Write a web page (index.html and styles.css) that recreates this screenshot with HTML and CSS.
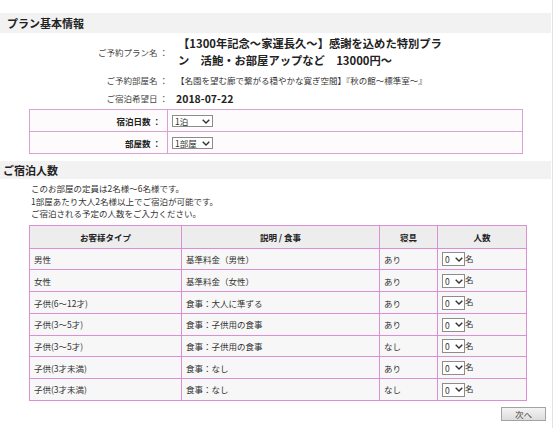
FILE: index.html
```html
<!DOCTYPE html>
<html lang="ja">
<head>
<meta charset="utf-8">
<title>プラン基本情報</title>
<link rel="stylesheet" href="styles.css">
</head>
<body>
<div class="page">
  <div class="sec-head h1">プラン基本情報</div>
  <div class="info">
    <div class="info-row plan">
      <div class="lbl">ご予約プラン名 ：</div>
      <div class="val plan-name">【1300年記念～家運長久～】感謝を込めた特別プラン　活鮑・お部屋アップなど　13000円～</div>
    </div>
    <div class="info-row room">
      <div class="lbl">ご予約部屋名 ：</div>
      <div class="val">【名園を望む廊で繋がる穏やかな寛ぎ空間】『秋の館～標準室～』</div>
    </div>
    <div class="info-row date">
      <div class="lbl">ご宿泊希望日 ：</div>
      <div class="val date-val">2018-07-22</div>
    </div>
  </div>
  <table class="stay">
    <tr>
      <th>宿泊日数 ：</th>
      <td><span class="sel w40"><span class="opt">1泊</span><svg class="chev" viewBox="0 0 8 5"><path d="M0.7 0.7 L4 4 L7.3 0.7"/></svg></span></td>
    </tr>
    <tr>
      <th>部屋数 ：</th>
      <td><span class="sel w40"><span class="opt">1部屋</span><svg class="chev" viewBox="0 0 8 5"><path d="M0.7 0.7 L4 4 L7.3 0.7"/></svg></span></td>
    </tr>
  </table>
  <div class="sec-head h2">ご宿泊人数</div>
  <div class="notes">
    <p>このお部屋の定員は2名様～6名様です。</p>
    <p>1部屋あたり大人2名様以上でご宿泊が可能です。</p>
    <p>ご宿泊される予定の人数をご入力ください。</p>
  </div>
  <table class="guests">
    <thead>
      <tr><th class="c1">お客様タイプ</th><th class="c2">説明 / 食事</th><th class="c3">寝具</th><th class="c4">人数</th></tr>
    </thead>
    <tbody>
      <tr><td>男性</td><td>基準料金（男性）</td><td>あり</td><td><span class="sel w22"><span class="opt">0</span><svg class="chev" viewBox="0 0 8 5"><path d="M0.7 0.7 L4 4 L7.3 0.7"/></svg></span>名</td></tr>
      <tr><td>女性</td><td>基準料金（女性）</td><td>あり</td><td><span class="sel w22"><span class="opt">0</span><svg class="chev" viewBox="0 0 8 5"><path d="M0.7 0.7 L4 4 L7.3 0.7"/></svg></span>名</td></tr>
      <tr><td>子供(6～12才)</td><td>食事：大人に準ずる</td><td>あり</td><td><span class="sel w22"><span class="opt">0</span><svg class="chev" viewBox="0 0 8 5"><path d="M0.7 0.7 L4 4 L7.3 0.7"/></svg></span>名</td></tr>
      <tr><td>子供(3～5才)</td><td>食事：子供用の食事</td><td>あり</td><td><span class="sel w22"><span class="opt">0</span><svg class="chev" viewBox="0 0 8 5"><path d="M0.7 0.7 L4 4 L7.3 0.7"/></svg></span>名</td></tr>
      <tr><td>子供(3～5才)</td><td>食事：子供用の食事</td><td>なし</td><td><span class="sel w22"><span class="opt">0</span><svg class="chev" viewBox="0 0 8 5"><path d="M0.7 0.7 L4 4 L7.3 0.7"/></svg></span>名</td></tr>
      <tr><td>子供(3才未満)</td><td>食事：なし</td><td>あり</td><td><span class="sel w22"><span class="opt">0</span><svg class="chev" viewBox="0 0 8 5"><path d="M0.7 0.7 L4 4 L7.3 0.7"/></svg></span>名</td></tr>
      <tr><td>子供(3才未満)</td><td>食事：なし</td><td>なし</td><td><span class="sel w22"><span class="opt">0</span><svg class="chev" viewBox="0 0 8 5"><path d="M0.7 0.7 L4 4 L7.3 0.7"/></svg></span>名</td></tr>
    </tbody>
  </table>
  <div class="actions"><button class="next" type="button">次へ</button></div>
</div>
</body>
</html>
```
FILE: styles.css
```css
html, body {
  margin: 0;
  padding: 0;
  background: #ffffff;
}
body {
  font-family: "Noto Sans CJK JP", "Noto Sans", sans-serif;
  font-size: 8.5px;
  color: #333333;
}
.page {
  width: 553px;
  min-height: 428px;
  box-sizing: border-box;
  border-right: 1px solid #e8e1dd;
  padding-top: 13px;
}
.sec-head {
  width: 551px;
  height: 20px;
  line-height: 20px;
  background: #f2f2f2;
  font-size: 11px;
  font-weight: bold;
  color: #222222;
  box-sizing: border-box;
}
.h1 { padding-left: 7px; }
.h2 { padding-left: 3px; height: 18px; line-height: 18px; margin-top: 7px; }

.info {
  display: flex;
  flex-direction: column;
}
.info-row {
  display: grid;
  grid-template-columns: 168px 1fr;
  column-gap: 8px;
  align-items: center;
}
.info-row.plan { height: 37px; }
.info-row.room { height: 19px; }
.info-row.date { height: 18px; margin-bottom: 2px; }
.lbl {
  text-align: right;
  color: #444444;
  white-space: nowrap;
}
.val { white-space: nowrap; }
.plan-name {
  white-space: normal;
  width: 270px;
  font-size: 11.3px;
  line-height: 17px;
  font-weight: bold;
  color: #222222;
  margin-left: 2px;
}
.date-val {
  font-size: 10.5px;
  font-weight: bold;
  color: #222222;
}

.stay {
  margin-left: 29px;
  width: 494px;
  border-collapse: collapse;
  border: 1px solid #d9a2d2;
  background: #fefbfd;
}
.stay th, .stay td {
  border: 1px solid #d9a2d2;
  height: 21px;
  padding: 0;
}
.stay th {
  width: 131px;
  text-align: right;
  padding-right: 6px;
  font-weight: bold;
  color: #222222;
}
.stay td { padding-left: 4px; }

.sel {
  display: inline-flex;
  align-items: center;
  justify-content: space-between;
  box-sizing: border-box;
  height: 12px;
  border: 1px solid #8c8c8c;
  background: #ffffff;
  vertical-align: middle;
  padding: 0 2px 0 2px;
  font-size: 8.5px;
  line-height: 10px;
  color: #333333;
}
.w40 { width: 41px; }
.w22 { width: 23px; height: 14px; margin-right: 0; padding-right: 1px; }
.chev {
  width: 8px;
  height: 5px;
  fill: none;
  stroke: #333333;
  stroke-width: 1.4;
}

.notes {
  padding: 3px 0 0 31px;
}
.notes p {
  margin: 0;
  line-height: 12.6px;
}

.guests {
  margin-top: 5px;
  margin-left: 29px;
  width: 494px;
  border-collapse: collapse;
  border: 1px solid #dc8fd4;
  table-layout: fixed;
}
.guests th, .guests td {
  border: 1px solid #dc8fd4;
  padding: 0 0 0 4px;
  height: 20.7px;
  text-align: left;
}
.guests thead th {
  background: #ededed;
  font-weight: bold;
  text-align: center;
  color: #222222;
  height: 22px;
  padding: 0;
}
.guests tbody td { background: #f7f7f7; }
.c1 { width: 151px; }
.c2 { width: 197px; }
.c3 { width: 57px; }
.c4 { width: 88px; }

.actions {
  display: flex;
  justify-content: flex-end;
  padding: 6px 6px 0 0;
}
.next {
  width: 45px;
  height: 14px;
  padding: 0;
  font-family: inherit;
  font-size: 8.5px;
  line-height: 12px;
  color: #444444;
  border: 1px solid #a3a3a3;
  border-radius: 0;
  background: linear-gradient(#f4f4f4, #dcdcdc);
}
```
